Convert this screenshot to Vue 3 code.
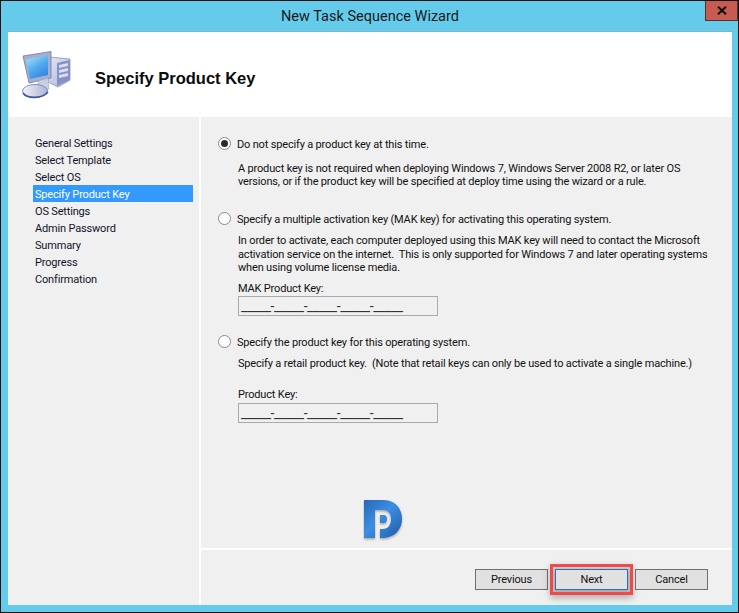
<script setup>
const steps = ['General Settings','Select Template','Select OS','Specify Product Key','OS Settings','Admin Password','Summary','Progress','Confirmation']
const activeStep = 'Specify Product Key'
const mask = '_____-_____-_____-_____-_____'
</script>

<template>
  <div class="window">
    <div class="titlebar">
      <div class="title">New Task Sequence Wizard</div>
      <div class="close"><svg width="10" height="9" viewBox="0 0 10 9"><path d="M1 0.8 L9 8.2 M9 0.8 L1 8.2" stroke="#111" stroke-width="2.2" fill="none"/></svg></div>
    </div>
    <div class="client">
      <header class="head">
        <svg class="pc" width="50" height="50" viewBox="0 0 50 50">
          <defs>
            <linearGradient id="scr" x1="0" y1="0" x2="0.6" y2="1"><stop offset="0" stop-color="#a9e8f6"/><stop offset="0.6" stop-color="#4fa8ee"/><stop offset="1" stop-color="#3b86e0"/></linearGradient>
            <linearGradient id="tower" x1="0" y1="0" x2="1" y2="1"><stop offset="0" stop-color="#e4e7f4"/><stop offset="1" stop-color="#a9b1d8"/></linearGradient>
            <linearGradient id="bs" x1="0" y1="0" x2="1" y2="0"><stop offset="0" stop-color="#f2f3f8"/><stop offset="1" stop-color="#aab4d4"/></linearGradient>
          </defs>
          <path d="M28 6 L48 8 L48 29 L36 36 L26 31 Z" fill="url(#tower)" stroke="#8088bd" stroke-width="0.7"/>
          <path d="M35 12 L48 9 L48 29 L35 35 Z" fill="#8791c6"/>
          <path d="M37 14l9-2v3l-9 2zM37 19l9-2v3l-9 2zM37 24l9-2v3l-9 2z" fill="#d9ddf0"/>
          <path d="M1 5 L29 0.5 L29 27 L7 32 Z" fill="#a6afd2" stroke="#6d78a8" stroke-width="0.8"/>
          <path d="M4 8.5 L26 4.5 L26 24 L8 28 Z" fill="url(#scr)"/>
          <path d="M16 30 L26 27 L27 38 L16 41 Z" fill="#c9cfe2" stroke="#9aa3c6" stroke-width="0.5"/>
          <ellipse cx="13" cy="40" rx="12.5" ry="6.5" fill="url(#bs)" stroke="#6a78b4" stroke-width="0.8"/>
          <path d="M1 42 C5 48 20 48 26 41" stroke="#4053a3" stroke-width="1.6" fill="none"/>
        </svg>
        <h1>Specify Product Key</h1>
      </header>
      <div class="middle">
        <nav class="steps">
          <div v-for="s in steps" :key="s" class="step" :class="{ active: s === activeStep }">{{ s }}</div>
        </nav>
        <main class="content">
          <div class="options">
            <section class="opt first">
              <div class="radio-row"><span class="radio on"></span><span class="radio-text">Do not specify a product key at this time.</span></div>
              <p class="desc">A product key is not required when deploying Windows 7, Windows Server 2008 R2, or later OS<br>versions, or if the product key will be specified at deploy time using the wizard or a rule.</p>
            </section>
            <section class="opt second">
              <div class="radio-row"><span class="radio"></span><span class="radio-text">Specify a multiple activation key (MAK key) for activating this operating system.</span></div>
              <p class="desc">In order to activate, each computer deployed using this MAK key will need to contact the Microsoft<br>activation service on the internet.&nbsp; This is only supported for Windows 7 and later operating systems<br>when using volume license media.</p>
              <label class="key-label">MAK Product Key:</label>
              <div class="key-box">{{ mask }}</div>
            </section>
            <section class="opt third">
              <div class="radio-row"><span class="radio"></span><span class="radio-text">Specify the product key for this operating system.</span></div>
              <p class="desc">Specify a retail product key.&nbsp; (Note that retail keys can only be used to activate a single machine.)</p>
              <label class="key-label far">Product Key:</label>
              <div class="key-box">{{ mask }}</div>
            </section>
            <svg class="logo" width="42" height="46" viewBox="0 0 42 46">
              <defs>
                <linearGradient id="lg" x1="0" y1="0" x2="1" y2="1"><stop offset="0" stop-color="#2a66b8"/><stop offset="0.45" stop-color="#3a8fe2"/><stop offset="1" stop-color="#2258a8"/></linearGradient>
                <filter id="sh" x="-20%" y="-20%" width="150%" height="150%"><feDropShadow dx="0" dy="1.5" stdDeviation="1.2" flood-color="#666" flood-opacity="0.55"/></filter>
              </defs>
              <path filter="url(#sh)" fill-rule="evenodd" fill="url(#lg)" d="M1 1 H20 C32 1 39 9 39 20 C39 31 31 39 19 39 H17 V30 H20 C25 30 28 26 28 20 C28 14 25 11 20 11 H12 V39 H1 Z M17 16 H21 C23 16 24 18 24 20 C24 22 23 24 21 24 H17 Z"/>
            </svg>
          </div>
          <footer class="actions">
            <button class="btn">Previous</button>
            <span class="highlight"><button class="btn primary">Next</button></span>
            <button class="btn">Cancel</button>
          </footer>
        </main>
      </div>
    </div>
  </div>
</template>

<style>
html, body { margin: 0; background: #000; }
</style>

<style scoped>
.window {
  width: 739px; height: 613px; box-sizing: border-box;
  border: 1px solid #0c1418;
  background: #65cbeb;
  padding: 0 6px 7px 7px;
  display: flex; flex-direction: column;
  font-family: Roboto, "Liberation Sans", sans-serif;
  font-size: 11px; letter-spacing: -0.17px; color: #111;
}
.titlebar { height: 30px; display: flex; position: relative; justify-content: center; align-items: center; flex: none; }
.title { font-size: 14.5px; letter-spacing: 0; color: #1a1a1a; }
.close {
  position: absolute; right: -6px; top: 0; width: 33px; height: 20px; box-sizing: border-box;
  background: #c75b52; border: 1px solid #55312c; border-top: 0;
  display: flex; align-items: center; justify-content: center;
}
.client { flex: 1; display: flex; flex-direction: column; background: #fff; border-top: 1px solid #7fb4c9; min-height: 0; }
.head { height: 85px; flex: none; display: flex; align-items: center; box-sizing: border-box; padding-left: 14px; }
.pc { margin-right: 23px; margin-top: 3px; }
h1 { margin: 7px 0 0; font-size: 16.5px; font-weight: 700; letter-spacing: 0; color: #0c0c0c; font-family: "Liberation Sans", sans-serif; }
.middle { flex: 1; display: flex; gap: 2px; min-height: 0; }
.steps { width: 191px; flex: none; background: #f0f0f0; padding-top: 17px; box-sizing: border-box; }
.step { height: 17px; line-height: 19px; margin: 0 6px 0 25px; padding-left: 2px; color: #10132a; }
.step.active { background: #3399ff; color: #fff; }
.content { flex: 1; display: flex; flex-direction: column; gap: 2px; min-width: 0; }
.options { flex: 1; background: #f0f0f0; position: relative; padding: 18px 0 0 17px; }
.radio-row { display: flex; align-items: center; gap: 6px; height: 17px; }
.radio-text { padding-top: 2px; }
.radio { width: 13px; height: 13px; box-sizing: border-box; border: 1px solid #8a8a8a; border-radius: 50%; background: #fff; flex: none; position: relative; }
.radio.on::after { content: ""; position: absolute; inset: 2px; border-radius: 50%; background: #2b2b2b; }
.desc { margin: 7px 0 0 20px; line-height: 13.5px; }
.first .desc { margin-top: 9.5px; }
.second { margin-top: 21.5px; }
.third { margin-top: 16.5px; }
.key-label { display: block; margin: 6px 0 0.5px 20px; line-height: 15px; }
.key-label.far { margin-top: 17px; }
.key-box {
  margin-left: 20px; width: 200px; height: 20px; box-sizing: border-box;
  border: 1px solid #a9a9a9; padding-left: 2px; line-height: 18px; color: #333; background: #f0f0f0; font-size: 14px; letter-spacing: -0.4px; overflow: hidden; white-space: nowrap;
}
.logo { position: absolute; left: 162px; top: 382px; }
.actions { height: 55px; flex: none; background: #f0f0f0; display: flex; justify-content: flex-end; align-items: flex-start; padding: 19px 24px 0 0; box-sizing: border-box; gap: 7px; }
.btn { width: 73px; height: 21px; box-sizing: border-box; background: #e1e1e1; border: 1px solid #6f6f6f; font: inherit; letter-spacing: inherit; color: #111; padding: 0; display: block; }
.btn.primary { border-color: #2f6fb0; }
.highlight { display: block; outline: 3px solid #f24a4a; outline-offset: 2px; box-shadow: 0 3px 7px 5px rgba(0,0,0,.28); }
</style>
